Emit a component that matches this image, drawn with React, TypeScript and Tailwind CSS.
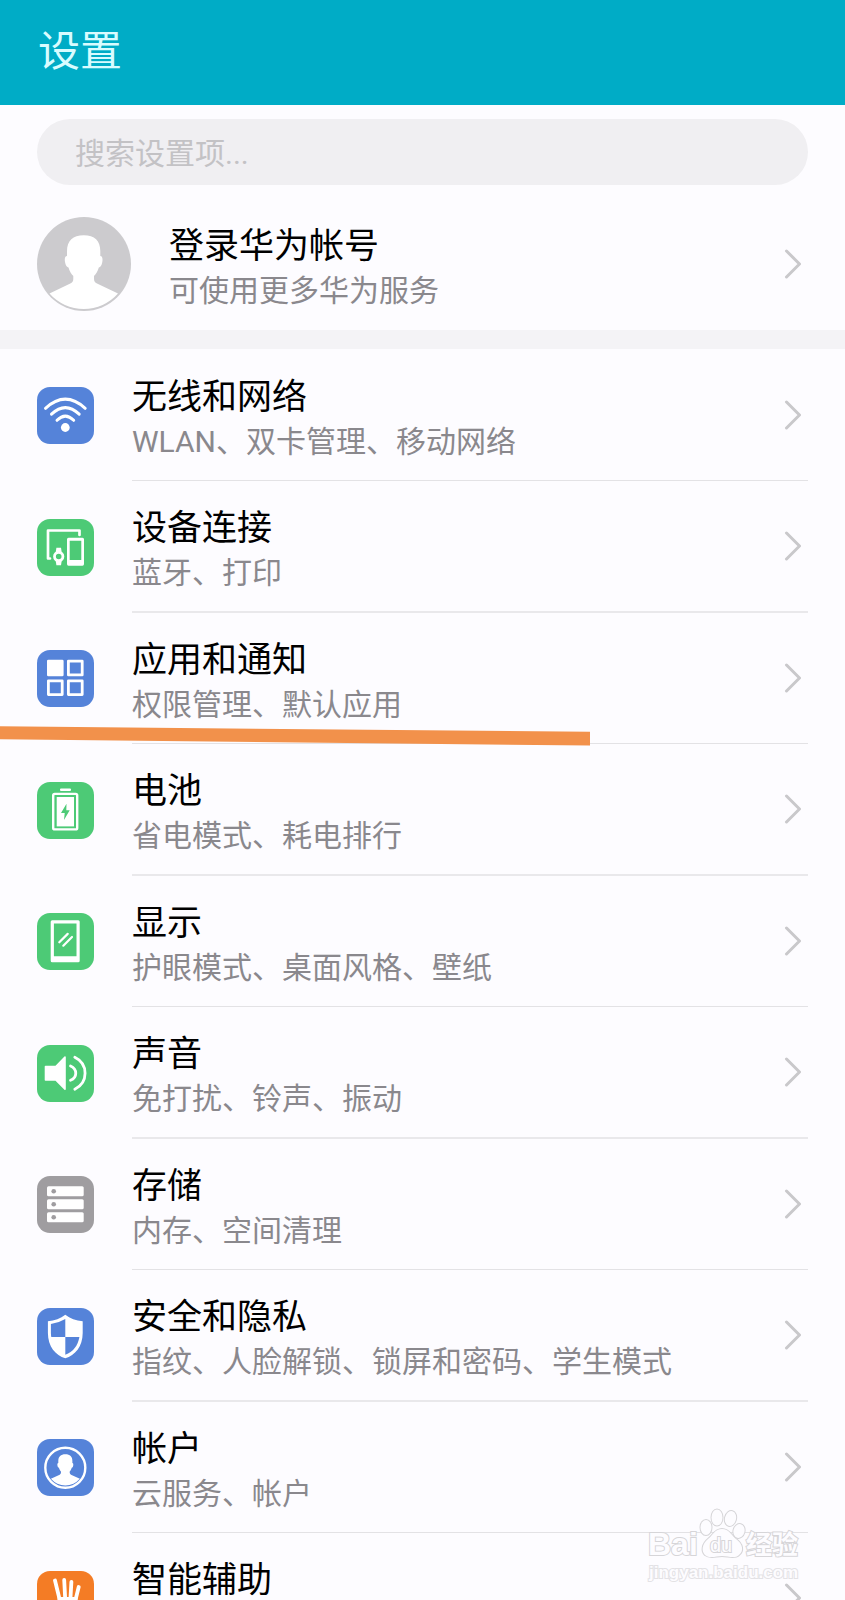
import type { ReactNode } from 'react';

const PERSON =
  'M46.7 18.3C36 18.3 30 24 30 34v5c-2 0-2.6 3-2 6 .5 3.500 2 5 3.500 5.500C32.500 54 34 57 36.300 59v3c0 2-1 3.500-3 4.500L12.500 76.500A45.500 45.500 0 0 0 81 76.500L60 66.500c-2-1-3-2.500-3-4.500v-3c2.300-2 3.800-5 4.800-8.500 1.500-.5 3-2 3.500-5.500.6-3 0-6-2-6v-5c0-10-5.600-15.700-16.600-15.700z';

interface Item {
  title: string;
  desc?: string;
  tile: string;
  icon: ReactNode;
  marked?: boolean;
}

const items: Item[] = [
  {
    title: '无线和网络',
    desc: 'WLAN、双卡管理、移动网络',
    tile: 'bg-[#5583d9]',
    icon: (
      <>
        <g fill="none" stroke="#fff" strokeWidth="3" strokeLinecap="round">
          <path d="M8.500 21.300Q28.300 3 48.200 21.300" />
          <path d="M14.500 27.200Q28.300 14 42.200 27.200" />
          <path d="M20 33.300Q28.300 25 36.700 33.300" />
        </g>
        <circle cx="28.300" cy="40.500" r="4.400" fill="#fff" />
      </>
    ),
  },
  {
    title: '设备连接',
    desc: '蓝牙、打印',
    tile: 'bg-[#4dca76]',
    icon: (
      <>
        <path
          d="M42.500 16V11.500H11V39.500H13"
          fill="none"
          stroke="#fff"
          strokeWidth="2.700"
          strokeLinecap="round"
          strokeLinejoin="round"
        />
        <path
          fillRule="evenodd"
          fill="#fff"
          d="M31.500 18.700H45.500Q47 18.700 47 20.200V45Q47 46.700 45.500 46.700H31.500Q30 46.700 30 45V20.200Q30 18.700 31.500 18.700ZM32.700 21.700V41H44.300V21.700Z"
        />
        <path d="M19.400 28.700h4.600l.8 5v7.500l-.8 5h-4.600l-.8-5v-7.500z" fill="#fff" />
        <circle cx="21.700" cy="37.500" r="4.200" fill="#4dca76" stroke="#fff" strokeWidth="2.800" />
      </>
    ),
  },
  {
    title: '应用和通知',
    desc: '权限管理、默认应用',
    tile: 'bg-[#5583d9]',
    marked: true,
    icon: (
      <g fill="none" stroke="#fff" strokeWidth="2.800" strokeLinejoin="round">
        <rect x="11.400" y="11.100" width="13.800" height="13.800" fill="#fff" />
        <rect x="31.400" y="11.100" width="13.800" height="13.800" />
        <rect x="11.400" y="30.800" width="13.800" height="13.800" />
        <rect x="31.400" y="30.800" width="13.800" height="13.800" />
      </g>
    ),
  },
  {
    title: '电池',
    desc: '省电模式、耗电排行',
    tile: 'bg-[#4dca76]',
    icon: (
      <>
        <rect x="23" y="6.500" width="11" height="2.600" rx="1" fill="#fff" />
        <rect x="16.200" y="11.900" width="24" height="35.500" rx="1.500" fill="none" stroke="#fff" strokeWidth="2.400" />
        <rect x="19.700" y="15" width="17.300" height="29.400" fill="#fff" />
        <path d="M29.500 21.700L24 31H27.700L27 38L32.700 28.300H29.300Z" fill="#4dca76" />
      </>
    ),
  },
  {
    title: '显示',
    desc: '护眼模式、桌面风格、壁纸',
    tile: 'bg-[#4dca76]',
    icon: (
      <>
        <path
          fillRule="evenodd"
          fill="#fff"
          d="M15.200 7.300H41.200Q42.700 7.300 42.700 8.800V47.800Q42.700 49.300 41.200 49.300H15.200Q13.700 49.300 13.700 47.800V8.800Q13.700 7.300 15.200 7.300ZM16.900 10.500V43.300H39.500V10.500Z"
        />
        <path d="M22.300 29.300L30.700 20.900M26.300 32.700L35 24" stroke="#fff" strokeWidth="2.200" strokeLinecap="round" />
      </>
    ),
  },
  {
    title: '声音',
    desc: '免打扰、铃声、振动',
    tile: 'bg-[#4dca76]',
    icon: (
      <>
        <path
          d="M8.500 21.500H18.800L28 12V44.300L18.800 35H8.500Z"
          fill="#fff"
          stroke="#fff"
          strokeWidth="1.600"
          strokeLinejoin="round"
        />
        <path
          d="M33.500 21C40.500 24 40.500 32.500 33.500 35.300M37.800 12.300C51.500 19 51.500 37.500 37.800 44.200"
          fill="none"
          stroke="#fff"
          strokeWidth="2.800"
          strokeLinecap="round"
        />
      </>
    ),
  },
  {
    title: '存储',
    desc: '内存、空间清理',
    tile: 'bg-[#9f9da0]',
    icon: [10.3, 23.3, 36.3].map((y) => (
      <g key={y}>
        <rect x="10" y={y} width="36.700" height="10" rx="1.500" fill="#fff" />
        <circle cx="16.700" cy={y + 5} r="2.300" fill="#9f9da0" />
      </g>
    )),
  },
  {
    title: '安全和隐私',
    desc: '指纹、人脸解锁、锁屏和密码、学生模式',
    tile: 'bg-[#5583d9]',
    icon: (
      <>
        <path
          d="M28.300 6.700C33 10.500 39 12.600 45.700 13.300V25C45.700 38.500 38 47.500 28.300 50.300C18.600 47.500 10.900 38.500 10.900 25V13.300C17.600 12.600 23.600 10.500 28.300 6.700Z"
          fill="#fff"
        />
        <path d="M28.300 11V29H14.300Q13.900 27 13.900 25V16Q22 14.800 28.300 11Z" fill="#5583d9" />
        <path d="M28.300 29H42.400C41 37.500 36 44 28.300 46.800Z" fill="#5583d9" />
      </>
    ),
  },
  {
    title: '帐户',
    desc: '云服务、帐户',
    tile: 'bg-[#5583d9]',
    icon: (
      <>
        <circle cx="28.300" cy="28.700" r="20" fill="none" stroke="#fff" strokeWidth="2.400" />
        <path d={PERSON} fill="#fff" transform="translate(8.600 7.500) scale(.423)" />
      </>
    ),
  },
  {
    title: '智能辅助',
    tile: 'bg-[#f47c25]',
    icon: (
      <>
        <path
          d="M18 9.500L23 30M27.200 9L28.300 30M34.400 10.800L33.300 30M41.700 16L38 31M10.500 32L22 40"
          stroke="#fff"
          strokeWidth="3.800"
          strokeLinecap="round"
        />
        <path d="M20.700 26L40.800 26L39 40Q36 49 28 49Q22 48 20 40Z" fill="#fff" />
      </>
    ),
  },
];

function Chevron() {
  return (
    <svg className="mr-1.5 h-[30px] w-[18px] shrink-0" viewBox="0 0 18 30" fill="none" aria-hidden="true">
      <path d="M2.500 2L15.500 15L2.500 28" stroke="#c9c8cb" strokeWidth="3" strokeLinecap="round" strokeLinejoin="round" />
    </svg>
  );
}

function Labels({ title, desc }: { title: string; desc?: string }) {
  return (
    <div className="min-w-0 flex-1 pt-1.5">
      <div className="text-[35px] leading-12 text-black">{title}</div>
      <div className="h-10 text-[30px] leading-10 text-[#8a888d]">{desc}</div>
    </div>
  );
}

function SettingRow({ title, desc, tile, icon, marked }: Item) {
  return (
    <li className="group relative px-[37px]">
      <a href="#" className="flex items-center gap-[38px]">
        <span className={`size-[57px] shrink-0 overflow-hidden rounded-[13px] ${tile}`}>
          <svg viewBox="0 0 57 57" className="size-full" fill="none" aria-hidden="true">
            {icon}
          </svg>
        </span>
        <span className="flex flex-1 items-center border-b border-[#e3e2e5] py-[18px] group-even:border-b-2 group-even:border-[#e9e8eb]">
          <Labels title={title} desc={desc} />
          <Chevron />
        </span>
      </a>
      {marked && (
        <svg className="absolute -bottom-0.5 left-0 h-5 w-[590px]" viewBox="0 0 590 20" aria-hidden="true">
          <path d="M0 0.300L590 5.800V19.500L0 13.300Z" fill="#f2914b" />
        </svg>
      )}
    </li>
  );
}

function Watermark() {
  return (
    <svg
      className="pointer-events-none absolute right-10 bottom-3 h-20 w-[160px] [paint-order:stroke]"
      viewBox="0 0 160 80"
      fill="#fdfcff"
      stroke="#d6d5d8"
      strokeWidth="2"
      aria-hidden="true"
    >
      <text x="3" y="47" className="font-['Liberation_Sans',sans-serif] text-[32px] font-bold">Bai</text>
      <ellipse cx="61" cy="19.500" rx="5.500" ry="7.500" />
      <ellipse cx="72" cy="9.500" rx="5.500" ry="8" />
      <ellipse cx="85.500" cy="10.500" rx="5.500" ry="7.500" transform="rotate(15 85.500 10.500)" />
      <ellipse cx="94" cy="23" rx="5.500" ry="7" transform="rotate(15 94 23)" />
      <path d="M77 21C84 21 86 27 91 31C98 36 99 43 94 47C90 51 83 48 77 48C71 48 65 51 60 47C56 43 57 36 63 31C68 27 70 21 77 21Z" />
      <text x="65" y="44" className="font-['Liberation_Sans',sans-serif] text-[20px]">du</text>
      <text x="101" y="46" className="font-['Noto_Sans_CJK_SC',sans-serif] text-[26px] font-bold">经验</text>
      <text x="4" y="70" stroke="#e3e2e5" className="font-['Liberation_Sans',sans-serif] text-[17px] font-bold">
        jingyan.baidu.com
      </text>
    </svg>
  );
}

export default function App() {
  return (
    <div className="relative flex h-screen flex-col overflow-hidden bg-[#fdfcff] font-['Roboto','Noto_Sans_CJK_SC',sans-serif]">
      <header className="shrink-0 bg-[#00acc6] px-[38px] pt-[22px] pb-[23px]">
        <h1 className="text-[42px] leading-[60px] text-[#d8fcff]">设置</h1>
      </header>

      <main className="min-h-0 flex-1 overflow-y-auto [scrollbar-width:none]">
        <div className="px-[37px] pt-3.5">
          <input
            type="search"
            aria-label="搜索设置项"
            placeholder="搜索设置项..."
            className="block h-[66px] w-full rounded-full bg-[#f0eff2] px-[38px] pt-0.5 text-[30px] outline-none placeholder:text-[#c3c2c5]"
          />
        </div>

        <a href="#" className="flex items-center gap-[38px] px-[37px] pt-8 pb-[19px]">
          <svg className="size-[94px] shrink-0" viewBox="0 0 94 94" aria-hidden="true">
            <circle cx="47" cy="47" r="47" fill="#cccbce" />
            <path d={PERSON} fill="#fff" />
          </svg>
          <Labels title="登录华为帐号" desc="可使用更多华为服务" />
          <Chevron />
        </a>

        <div className="h-[19px] bg-[#f4f3f6]" />

        <ul className="pt-px">
          {items.map((item) => (
            <SettingRow key={item.title} {...item} />
          ))}
        </ul>
      </main>

      <Watermark />
    </div>
  );
}
